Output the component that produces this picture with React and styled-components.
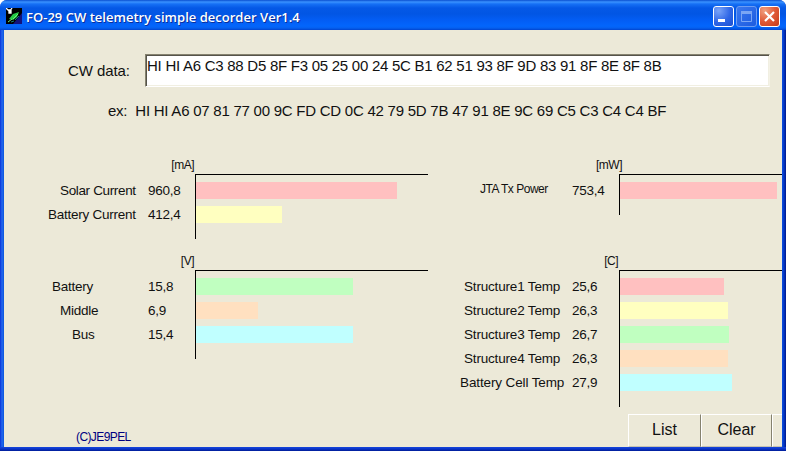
import React from "react";
import styled, { createGlobalStyle } from "styled-components";

const Global = createGlobalStyle`
  * { box-sizing: border-box; }
  body { margin: 0; background: #fff; overflow: hidden; }
`;

const Window = styled.div`
  width: 786px;
  height: 451px;
  display: flex;
  flex-direction: column;
  overflow: hidden;
  border-radius: 7px 7px 0 0;
  background:
    linear-gradient(180deg, #1646dc 0, #0a34c8 2px, #001c96 4px) 0 447px / 100% 4px no-repeat,
    linear-gradient(90deg, #0831d9 0, #2468ee 2px, #0855dd 4px, #0c50e0 782px, #0436c4 784px, #00188a 786px);
  font-family: "Liberation Sans", Arial, sans-serif;
  color: #111;
`;

const TitleBar = styled.header`
  height: 30px;
  flex: none;
  display: flex;
  align-items: center;
  padding: 2px 6px 0 6px;
  background: linear-gradient(180deg, #0a4fd0 0, #3a92ff 2px, #1670f5 4px, #0558e6 8px, #0256e4 14px, #035df4 20px, #0366fc 26px, #0560f0 28px, #0144cf 30px);
`;

const Title = styled.h1`
  flex: 1;
  margin: 1px 0 0 4px;
  font: 600 13px/18px "Open Sans", sans-serif;
  letter-spacing: 0.02px;
  white-space: nowrap;
  color: #fff;
  text-shadow: 1px 1px 0 #0a2f9a;
`;

const WindowButtons = styled.div`
  display: flex;
  gap: 2px;
`;

const kinds = {
  normal: "radial-gradient(circle at 25% 20%, #7aa4f8, #2f66e6 55%, #1c4fd0)",
  dim: "linear-gradient(135deg, #3b78ee, #1c5be0)",
  close: "radial-gradient(circle at 25% 20%, #f0a080, #e05a38 50%, #c43a18)",
};

const WindowButton = styled.button`
  width: 21px;
  height: 21px;
  padding: 0;
  border: 1px solid ${(p) => (p.$kind === "dim" ? "#6d9cf2" : "#fff")};
  border-radius: 3px;
  background: ${(p) => kinds[p.$kind]};
  svg { display: block; }
`;

const Client = styled.main`
  width: 778px;
  height: 417px;
  margin-left: 4px;
  padding-top: 24px;
  display: flex;
  flex-direction: column;
  overflow: hidden;
  background: #ece9d8;
`;

const InputRow = styled.div`
  display: flex;
  height: 33px;
  padding-left: 64px;
`;

const FieldLabel = styled.label`
  width: 77px;
  font-size: 15px;
  line-height: 34px;
  letter-spacing: -0.08px;
  white-space: pre;
`;

const DataField = styled.div`
  width: 625px;
  height: 33px;
  padding: 2px 0 0 1px;
  border: 1px solid;
  border-color: #85826f #f4f2e6 #fff #85826f;
  box-shadow: inset 1px 1px 0 #55534a, inset -1px -1px 0 #f1efe2;
  background: #fff;
  font-size: 15px;
  line-height: 18px;
  letter-spacing: -0.26px;
  white-space: nowrap;
`;

const Example = styled.div`
  display: flex;
  gap: 8px;
  margin-top: 14px;
  padding-left: 104px;
  font-size: 15px;
  line-height: 20px;
  letter-spacing: -0.24px;
  white-space: nowrap;
`;

const Charts = styled.div`
  display: grid;
  grid-template-columns: 424px 354px;
  grid-template-rows: 96px 153px;
  margin-top: 37px;
`;

const Unit = styled.div`
  width: 190px;
  height: 16px;
  margin-left: ${(p) => p.$shift || 0}px;
  font-size: 12px;
  line-height: 14px;
  letter-spacing: -0.5px;
  text-align: right;
`;

const Plot = styled.div`
  display: grid;
  grid-template-columns: 191px 1fr;
`;

const Readings = styled.div`
  padding-top: 5px;
`;

const Reading = styled.div`
  display: flex;
  height: 24px;
  font-size: 13.5px;
  line-height: 24px;
  letter-spacing: -0.25px;
  white-space: nowrap;
`;

const Name = styled.span`
  width: 144px;
  padding-left: ${(p) => p.$indent}px;
  font-size: ${(p) => (p.$small ? 12 : 13.5)}px;
  line-height: ${(p) => (p.$small ? 21 : 24)}px;
  letter-spacing: ${(p) => (p.$small ? -0.48 : p.$spacing ?? -0.25)}px;
`;

const Axis = styled.div`
  width: ${(p) => p.$width}px;
  height: ${(p) => p.$height}px;
  display: flex;
  flex-direction: column;
  gap: 7px;
  padding-top: 7px;
  border: solid #000;
  border-width: 1px 0 0 1px;
`;

const Bar = styled.div`
  flex: none;
  height: 17px;
  background: ${(p) => p.$color};
`;

const Footer = styled.footer`
  flex: 1;
  display: flex;
  justify-content: space-between;
  padding-left: 72px;
`;

const Credit = styled.span`
  margin-top: 23px;
  font-size: 12px;
  line-height: 14px;
  letter-spacing: -0.6px;
  color: #000080;
`;

const Buttons = styled.div`
  display: flex;
  width: 154px;
  height: 33px;
  margin-top: 7px;
`;

const PushButton = styled.button`
  flex: none;
  width: ${(p) => p.$width}px;
  padding: 0 0 1px;
  border: 1px solid;
  border-color: #fff #85826f #c5c2b2 #fff;
  background: #ece9d8;
  font: 16px "Liberation Sans", Arial, sans-serif;
  color: #111;
`;

const pink = "#ffc0c0";
const yellow = "#ffffc0";
const green = "#c0ffc0";
const orange = "#ffe0c0";
const cyan = "#c0ffff";

const charts = [
  {
    unit: "[mA]", width: 233, height: 65,
    rows: [
      { name: "Solar Current", indent: 56, spacing: -0.35, value: "960,8", bar: 201, color: pink },
      { name: "Battery Current", indent: 44, value: "412,4", bar: 86, color: yellow },
    ],
  },
  {
    unit: "[mW]", width: 163, height: 41, shift: 4,
    rows: [{ name: "JTA Tx Power", indent: 52, small: true, value: "753,4", bar: 157, color: pink }],
  },
  {
    unit: "[V]", width: 233, height: 89,
    rows: [
      { name: "Battery", indent: 48, value: "15,8", bar: 157, color: green },
      { name: "Middle", indent: 56, value: "6,9", bar: 62, color: orange },
      { name: "Bus", indent: 68, value: "15,4", bar: 157, color: cyan },
    ],
  },
  {
    unit: "[C]", width: 163, height: 137,
    rows: [
      { name: "Structure1 Temp", indent: 36, spacing: -0.18, value: "25,6", bar: 104, color: pink },
      { name: "Structure2 Temp", indent: 36, spacing: -0.18, value: "26,3", bar: 108, color: yellow },
      { name: "Structure3 Temp", indent: 36, spacing: -0.18, value: "26,7", bar: 109, color: green },
      { name: "Structure4 Temp", indent: 36, spacing: -0.18, value: "26,3", bar: 108, color: orange },
      { name: "Battery Cell Temp", indent: 32, spacing: -0.12, value: "27,9", bar: 112, color: cyan },
    ],
  },
];

function Chart({ chart }) {
  return (
    <section>
      <Unit $shift={chart.shift}>{chart.unit}</Unit>
      <Plot>
        <Readings>
          {chart.rows.map((r) => (
            <Reading key={r.name}>
              <Name $indent={r.indent} $small={r.small} $spacing={r.spacing}>{r.name}</Name>
              <span>{r.value}</span>
            </Reading>
          ))}
        </Readings>
        <Axis $width={chart.width} $height={chart.height}>
          {chart.rows.map((r) => (
            <Bar key={r.name} $color={r.color} style={{ width: r.bar }} />
          ))}
        </Axis>
      </Plot>
    </section>
  );
}

function AppIcon() {
  return (
    <svg width="16" height="16" viewBox="0 0 16 16">
      <path d="M0 0h16v16H0z" fill="#000" />
      <path d="M16 5v11H7z" fill="#12127c" />
      <path d="M0 0l3 3M6 0L4 3M3 2h2v3H3z" stroke="#fff" strokeWidth="1.3" fill="#fff" />
      <path d="M3 11L7 6l6-2-2 5-4 3z" fill="#25c944" />
      <path d="M2 14l4-3M7 11l5-5" stroke="#6cf07c" strokeWidth="1" />
      <path d="M9 12l4-4M5 14l3-1" stroke="#168078" strokeWidth="1" />
    </svg>
  );
}

export default function App() {
  return (
    <>
      <Global />
      <Window>
        <TitleBar>
          <AppIcon />
          <Title>FO-29 CW telemetry simple decorder Ver1.4</Title>
          <WindowButtons>
            <WindowButton $kind="normal" aria-label="Minimize">
              <svg width="19" height="19"><path d="M4 12h7v3H4z" fill="#fff" /></svg>
            </WindowButton>
            <WindowButton $kind="dim" aria-label="Maximize">
              <svg width="19" height="19">
                <path d="M4.500 5h10v9.500h-10z" fill="none" stroke="#7ba6f4" />
                <path d="M4 4h11v3H4z" fill="#7ba6f4" />
              </svg>
            </WindowButton>
            <WindowButton $kind="close" aria-label="Close">
              <svg width="19" height="19"><path d="M5 5l9 9M14 5l-9 9" stroke="#fff" strokeWidth="2.200" /></svg>
            </WindowButton>
          </WindowButtons>
        </TitleBar>
        <Client>
          <InputRow>
            <FieldLabel>CW data:</FieldLabel>
            <DataField>
              HI HI A6 C3 88 D5 8F F3 05 25 00 24 5C B1 62 51 93 8F 9D 83 91 8F 8E 8F 8B
            </DataField>
          </InputRow>
          <Example>
            <span>ex:</span>
            <span>HI HI A6 07 81 77 00 9C FD CD 0C 42 79 5D 7B 47 91 8E 9C 69 C5 C3 C4 C4 BF</span>
          </Example>
          <Charts>
            {charts.map((c) => <Chart key={c.unit} chart={c} />)}
          </Charts>
          <Footer>
            <Credit>(C)JE9PEL</Credit>
            <Buttons>
              <PushButton $width={73}>List</PushButton>
              <PushButton $width={71}>Clear</PushButton>
              <PushButton $width={71} aria-label="Close" />
            </Buttons>
          </Footer>
        </Client>
      </Window>
    </>
  );
}
